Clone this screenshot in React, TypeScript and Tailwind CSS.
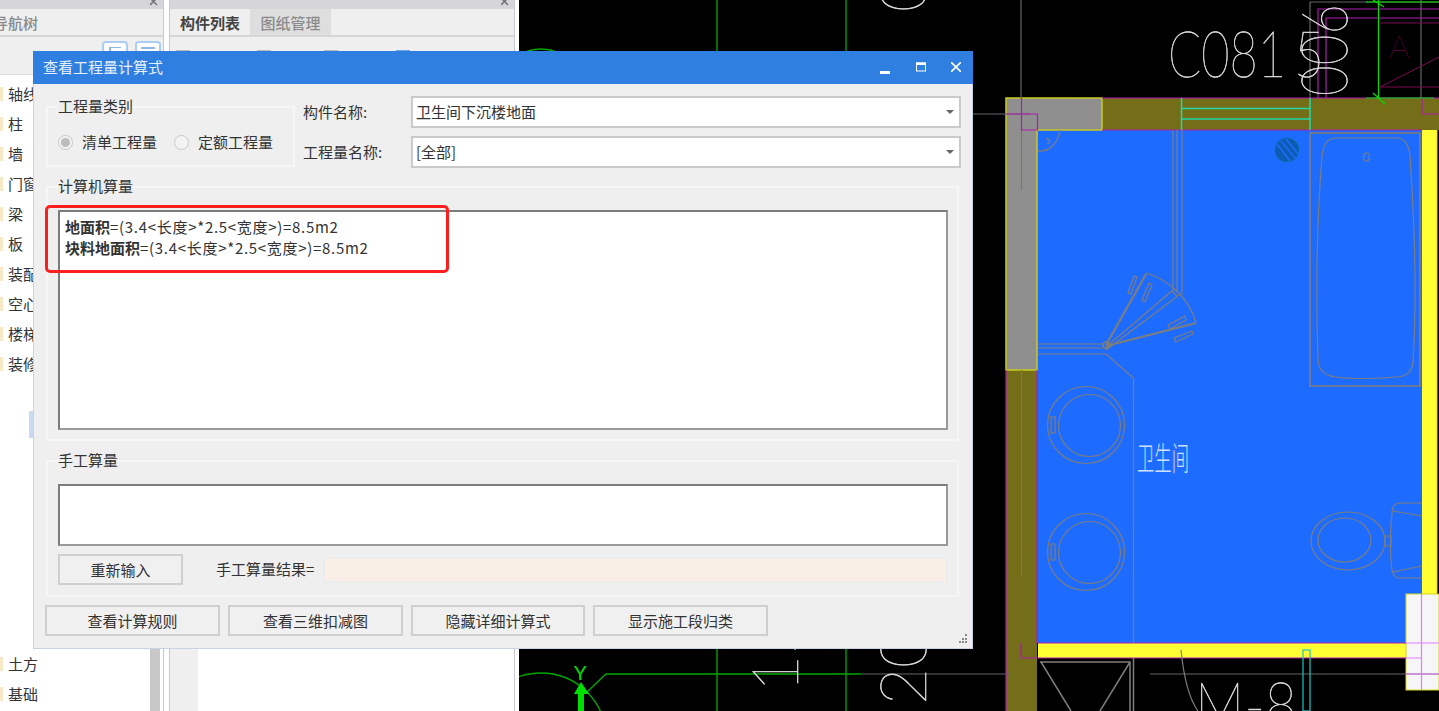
import React from "react";

const treeTop = ["轴线", "柱", "墙", "门窗", "梁", "板", "装配", "空心", "楼梯", "装修"];
const treeBottom = ["土方", "基础"];
const toolItems = [
  { label: "新建", width: "w-[81px]", icon: "border-[#b9b9b9] bg-[#f6dfae]" },
  { label: "删除", width: "w-[67px]", icon: "border-[#b9b9b9] bg-white" },
  { label: "复制", width: "w-[72px]", icon: "border-[#b9b9b9] bg-white" },
  { label: "层间复制", width: "w-[100px]", icon: "border-[#6fa4e6] bg-[#bcd6f7]" },
];

function TreeRow({ label }: { label: string }) {
  return (
    <div className="flex h-[30px] items-center whitespace-nowrap text-[15px] text-[#333]">
      <span className="mr-[5px] h-[14px] w-[3px] shrink-0 bg-[#f9e8c5]" />
      {label}
    </div>
  );
}

function PanelHeader() {
  return (
    <div className="flex h-[9px] items-start justify-end overflow-hidden bg-[#d5d5da] pr-[5px]">
      <svg width="8" height="9" viewBox="0 0 8 9">
        <path d="M0 -2L7 5M7 -2L0 5" stroke="#777" strokeWidth="1.6" />
      </svg>
    </div>
  );
}

function LeftPanel() {
  return (
    <div className="flex h-full w-[164px] shrink-0 flex-col border-r border-[#c9c9cf]">
      <PanelHeader />
      <div className="h-[28px] overflow-hidden border-b-2 border-[#d6d6da] bg-[#efefef] text-[15px] font-medium leading-[27px] text-[#8a8a8a]">
        <span className="-ml-[7px] inline-block">导航树</span>
      </div>
      <div className="flex h-[38px] justify-end gap-[7px] border-b border-[#ddd] bg-[#efefef] pr-[2px] pt-[4px]">
        <div className="h-[26px] w-[26px] rounded-[4px] border-2 border-[#a9cdf3] bg-white pl-[5px] pt-[4px]">
          <div className="h-[12px] w-[12px] border-l-2 border-t border-[#8fb8e6]" />
        </div>
        <div className="h-[26px] w-[26px] rounded-[4px] border-2 border-[#a9cdf3] bg-white px-[4px] pt-[4px]">
          <div className="h-[12px] border-t-2 border-[#8fb8e6]" />
        </div>
      </div>
      <div className="relative flex-1 overflow-hidden bg-white">
        <div className="pt-[4px]">
          {treeTop.map((t) => (
            <TreeRow key={t} label={t} />
          ))}
        </div>
        <div className="ml-[29px] mt-[32px] h-[27px] w-[5px] bg-[#c9d9ef]" />
        <div className="absolute bottom-[2px] left-0">
          {treeBottom.map((t) => (
            <TreeRow key={t} label={t} />
          ))}
        </div>
        <div className="absolute bottom-0 right-[3px] top-0 w-[10px] bg-[#c8c8c8]" />
      </div>
    </div>
  );
}

function MiddlePanel() {
  return (
    <div className="flex h-full w-[346px] shrink-0 flex-col border-x border-[#c9c9cf]">
      <PanelHeader />
      <div className="flex h-[28px] border-b-2 border-[#d6d6da] bg-[#efefef] text-[15px] font-medium leading-[27px]">
        <div className="w-[80px] text-center font-bold text-[#444]">构件列表</div>
        <div className="w-[81px] bg-[#dedede] text-center text-[#8a8a8a]">图纸管理</div>
      </div>
      <div className="flex h-[36px] items-center bg-[#efefef] pl-[6px] pt-[6px] text-[15px] text-[#555]">
        {toolItems.map((item) => (
          <div key={item.label} className={`flex items-center gap-[8px] ${item.width}`}>
            <span className={`h-[16px] w-[14px] border ${item.icon}`} />
            {item.label}
          </div>
        ))}
      </div>
      <div className="flex flex-1">
        <div className="w-[28px] bg-[#efefef]" />
        <div className="flex-1 bg-white" />
      </div>
    </div>
  );
}

function CadCanvas() {
  const gray = "#7d7d7d";
  const mag = "#b01cb0";
  return (
    <svg viewBox="519 0 920 711" className="h-full min-w-0 flex-1 bg-black">
      {/* floor and walls */}
      <rect x="1037" y="130" width="386" height="513" fill="#1e6cff" />
      <rect x="1102" y="98" width="337" height="32" fill="#736e17" />
      <rect x="1006" y="370" width="31" height="341" fill="#736e17" />
      <rect x="1422" y="130" width="15" height="464" fill="#ffff33" />
      <rect x="1038" y="643" width="368" height="15" fill="#ffff33" />
      <polygon points="1006,98 1102,98 1102,130 1037,130 1037,370 1006,370" fill="#8f8f8f" stroke="#c9c920" strokeWidth="1.5" />
      <rect x="1406" y="594" width="33" height="96" fill="#f6f6f6" stroke="#d6d620" />

      {/* grid lines */}
      <g stroke="#00a800" strokeWidth="1.3" fill="none">
        <path d="M717 0V711M846 0V711" />
        <path d="M861 674H606L587 692" />
        <circle cx="541" cy="738" r="65" />
        <circle cx="541" cy="90" r="41" />
      </g>
      <g stroke="#666" strokeWidth="1.2" fill="none">
        <path d="M861 674H1011M1150 674H1439M973 114H1030M1021 0V98M1310 2V98M1421 0V98M1310 2H1439" />
        <path d="M1021.5 130V190M1021.5 370V575" stroke="#7d7a55" />
      </g>

      {/* magenta outlines */}
      <g stroke={mag} strokeWidth="1.2" fill="none">
        <path d="M1102 98H1439M1102 130H1422M1037 370V643M1006 370V711M1038 643H1406M1038 658H1406" />
        <path d="M1021.5 98V130H1037.5V114H1006" />
        <path d="M1422 98V114H1439M1021 643V658H1038" />
        <path d="M1318 98V9H1439M1326 98V18H1439M1437.5 130V594" />
        <path d="M1421.5 594V690M1406 643H1439M1406 658H1422M1406 674H1439" stroke="#e27cff" />
      </g>
      <g stroke="#7c0a50" strokeWidth="1" fill="none">
        <path d="M1380 23H1439M1380 87H1439M1380 87L1439 57" />
      </g>
      <text x="1389" y="58" fontFamily="Lato, sans-serif" fontWeight="100" fontSize="32" fill="#8c0a50">A</text>

      {/* window and dimension */}
      <g stroke="#25d8a8" strokeWidth="1.5" fill="none">
        <path d="M1181.5 98V130M1310 98V130M1181 108.5H1310M1181 119H1310" />
      </g>
      <g stroke="#00e000" strokeWidth="1.2" fill="none">
        <path d="M1378.5 0V98M1366 2H1439M1366 98H1434M1373 0L1384 7M1373 93L1385 104" />
      </g>

      {/* plan labels */}
      <g fontFamily="Lato, sans-serif" fontWeight="100" fill="#e8e8e8" stroke="#d8d8d8" strokeWidth="0.6">
        <text x="1168" y="77" fontSize="64" textLength="118" lengthAdjust="spacingAndGlyphs">C081</text>
        <text x="1294" y="77" fontSize="64" textLength="30" lengthAdjust="spacingAndGlyphs">5</text>
        <text transform="translate(1347 96) rotate(-90)" fontSize="64" textLength="92" lengthAdjust="spacingAndGlyphs">006</text>
        <text transform="translate(926 705) rotate(-90)" fontSize="64">20</text>
        <text transform="translate(926 12) rotate(-90)" fontSize="64">00</text>
        <text transform="translate(798 692) rotate(-90)" fontSize="64">15</text>
        <text x="1195" y="728" fontSize="64" textLength="102" lengthAdjust="spacingAndGlyphs">M-8</text>
      </g>
      <text x="1137" y="470" fontFamily="'Noto Sans CJK SC', sans-serif" fontWeight="300" fontSize="32" textLength="52" lengthAdjust="spacingAndGlyphs" fill="#cfe0ff">卫生间</text>
      <text x="574" y="680" fontFamily="Lato, sans-serif" fontSize="20" fill="#00e000">Y</text>
      <path d="M581 682L589 694H584V711H578V694H574Z" fill="#00e000" />

      {/* fixtures */}
      <g stroke={gray} strokeWidth="1.2" fill="none">
        <path d="M1173 130V292L1177 296M1177 130V292M1182 130V295" />
        <path d="M1038 344H1103M1038 348H1103M1038 354H1106L1133.5 378V643" />
        <path d="M1146 273C1170 280 1190 300 1196 323" />
        <path d="M1106 345L1146 274M1106 346L1196 323" strokeWidth="2.2" />
        <path d="M1106 347L1173 290M1106 350L1179 295" />
        <circle cx="1106" cy="345" r="3" strokeWidth="1.5" />
        <path d="M1128 293L1134 276L1137 277L1131 294ZM1142 300L1149 283L1152 285L1145 302ZM1168 325L1185 316L1186 320L1170 329ZM1174 338L1192 331L1193 334L1176 342Z" />
        <rect x="1310" y="133" width="110" height="253" strokeWidth="1.6" />
        <path d="M1336 138H1396C1405 138 1409 146 1410 156C1415 230 1417 300 1413 362C1412 372 1406 377 1396 377C1370 379 1350 379 1336 377C1326 376 1319 372 1318 360C1316 300 1316 230 1322 156C1323 146 1327 138 1336 138Z" />
        <ellipse cx="1366.5" cy="157" rx="3" ry="4" />
        <circle cx="1086" cy="425" r="38.5" />
        <circle cx="1089.5" cy="425.5" r="31" />
        <rect x="1051" y="417" width="4" height="16" />
        <circle cx="1086" cy="552" r="38.5" />
        <circle cx="1089.5" cy="552.5" r="31" />
        <rect x="1051" y="544" width="4" height="16" />
        <ellipse cx="1348" cy="541" rx="37" ry="29" />
        <ellipse cx="1344.5" cy="540" rx="26.5" ry="22" />
        <path d="M1422 503H1400C1394 503 1392 508 1392 514C1390 530 1390 555 1392 570C1393 575 1396 578 1400 578H1422M1393 511L1422 516M1393 572L1422 566M1385 536V546H1391V536Z" />
        <path d="M1038 151C1050 152 1058 143 1060 130M1047 144C1052 143 1049 138 1046 139" />
        <path d="M1040 662H1130V711M1041 662L1071 711M1130 662L1100 711M1133.5 658V711" strokeWidth="1.5" />
        <path d="M1181 650C1184 680 1190 700 1198 711" />
      </g>
      <circle cx="1287" cy="150" r="12" fill="#0d5cb4" stroke="#0a6fb0" />
      <path d="M1277 144L1290 161M1281 141L1296 159M1286 139L1299 155" stroke="#1e6cff" strokeWidth="1.5" />
      <rect x="1303" y="650" width="7" height="61" fill="none" stroke="#14c8c8" strokeWidth="1.2" />
    </svg>
  );
}

function GroupBox({ title, className, children }: { title: string; className: string; children: React.ReactNode }) {
  return (
    <fieldset className={`border-2 border-[#f6f6f6] pl-[10px] ${className}`}>
      <legend className="relative -top-px text-[15px] leading-[20px] text-[#333]">{title}</legend>
      {children}
    </fieldset>
  );
}

function Radio({ label, checked }: { label: string; checked?: boolean }) {
  return (
    <div className="flex items-center gap-[9px]">
      <span className="flex h-[15px] w-[15px] items-center justify-center rounded-full border border-[#c8c8c8] bg-[#f3f3f3]">
        {checked && <span className="h-[9px] w-[9px] rounded-full bg-[#bdbdbd]" />}
      </span>
      <span className="text-[15px] leading-5 text-[#333]">{label}</span>
    </div>
  );
}

function Select({ value }: { value: string }) {
  return (
    <div className="flex h-[32px] w-[550px] items-center justify-between border-2 border-[#cacaca] bg-white pl-[3px] pr-[5px] text-[15px] text-[#333]">
      {value}
      <span className="h-0 w-0 border-x-[4px] border-t-[4px] border-x-transparent border-t-[#666]" />
    </div>
  );
}

function Btn({ label, className }: { label: string; className: string }) {
  return (
    <button className={`h-[31px] border-2 border-[#cfcfcf] bg-[#f0f0f0] text-[15px] leading-none text-[#333] ${className}`}>
      {label}
    </button>
  );
}

function Formula({ name }: { name: string }) {
  return (
    <div>
      <b className="font-bold">{name}</b>
      <span className="tracking-[0.7px]">=(3.4&lt;长度&gt;*2.5&lt;宽度&gt;)=8.5m2</span>
    </div>
  );
}

function Dialog() {
  return (
    <div className="absolute left-[33px] top-[51px] flex h-[598px] w-[940px] flex-col border-b border-l border-r border-[#c9d3e2] bg-[#efefef] font-['Noto_Sans_CJK_SC','Liberation_Sans',sans-serif]">
      <div className="-mx-px flex h-[33px] shrink-0 items-center justify-between bg-[#2e7fe0] pl-[10px] pr-[12px] text-[15px] text-[#e6f0fc]">
        <span>查看工程量计算式</span>
        <div className="flex items-center gap-[25px]">
          <svg width="10" height="10" viewBox="0 0 10 10" className="mr-px mt-[2px]"><rect x="0" y="7" width="10" height="3" fill="#fff" /></svg>
          <svg width="10" height="10" viewBox="0 0 10 10" className="mt-[-1px]"><rect x="0.5" y="1" width="9" height="8" fill="none" stroke="#fff" /><rect x="0" y="0.5" width="10" height="2.5" fill="#fff" /></svg>
          <svg width="10" height="10" viewBox="0 0 10 10" className="mt-[-1px]"><path d="M0 0L10 10M10 0L0 10" stroke="#fff" strokeWidth="1.6" /></svg>
        </div>
      </div>
      <div className="relative flex flex-1 flex-col pl-[12px]">
        <div className="mt-[12px] flex">
          <GroupBox title="工程量类别" className="mt-px h-[70px] w-[249px]">
            <div className="flex gap-[17px] pt-[15px]">
              <Radio label="清单工程量" checked />
              <Radio label="定额工程量" />
            </div>
          </GroupBox>
          <div className="ml-[8px] flex flex-col gap-[8px]">
            <div className="flex items-center">
              <span className="w-[108px] text-[15px] text-[#333]">构件名称:</span>
              <Select value="卫生间下沉楼地面" />
            </div>
            <div className="flex items-center">
              <span className="w-[108px] text-[15px] text-[#333]">工程量名称:</span>
              <Select value="[全部]" />
            </div>
          </div>
        </div>
        <GroupBox title="计算机算量" className="mt-[9px] h-[264px] w-[913px] pt-[13px]">
          <div className="h-[220px] w-[890px] border-2 border-[#7c7c7c] border-b-[#9a9a9a] border-r-[#9a9a9a] bg-white px-[5px] py-[4px] text-[15px] leading-[21px] text-[#333]">
            <Formula name="地面积" />
            <Formula name="块料地面积" />
          </div>
        </GroupBox>
        <GroupBox title="手工算量" className="mt-[10px] h-[146px] w-[913px] pt-[13px]">
          <div className="h-[62px] w-[890px] border-2 border-[#7c7c7c] border-b-[#9a9a9a] border-r-[#9a9a9a] bg-white" />
          <div className="mt-[8px] flex items-center">
            <Btn label="重新输入" className="w-[125px]" />
            <span className="ml-[33px] w-[107px] text-[15px] text-[#333]">手工算量结果=</span>
            <div className="h-[26px] w-[625px] border-2 border-[#ececec] bg-[#f9efe6]" />
          </div>
        </GroupBox>
        <div className="-ml-px mt-[8px] flex gap-[8px]">
          <Btn label="查看计算规则" className="w-[175px]" />
          <Btn label="查看三维扣减图" className="w-[175px]" />
          <Btn label="隐藏详细计算式" className="w-[174px]" />
          <Btn label="显示施工段归类" className="w-[175px]" />
        </div>
        {/* highlight drawn over the formula box */}
        <div className="absolute left-[11px] top-[121px] h-[68px] w-[404px] rounded-[5px] border-[3px] border-[#fb1f1f]" />
        <svg width="10" height="10" viewBox="0 0 10 10" className="absolute bottom-[4px] right-[4px]">
          <path d="M7 0h2v2H7zM4 4h2v2H4zM7 4h2v2H7zM1 7h2v2H1zM4 7h2v2H4zM7 7h2v2H7z" fill="#8a8a8a" />
        </svg>
      </div>
    </div>
  );
}

export default function App() {
  return (
    <div className="relative flex h-[711px] w-[1439px] overflow-hidden bg-white font-['Noto_Sans_CJK_SC','Liberation_Sans',sans-serif]">
      <LeftPanel />
      <div className="w-[5px] shrink-0" />
      <MiddlePanel />
      <div className="w-[4px] shrink-0" />
      <CadCanvas />
      <Dialog />
    </div>
  );
}
